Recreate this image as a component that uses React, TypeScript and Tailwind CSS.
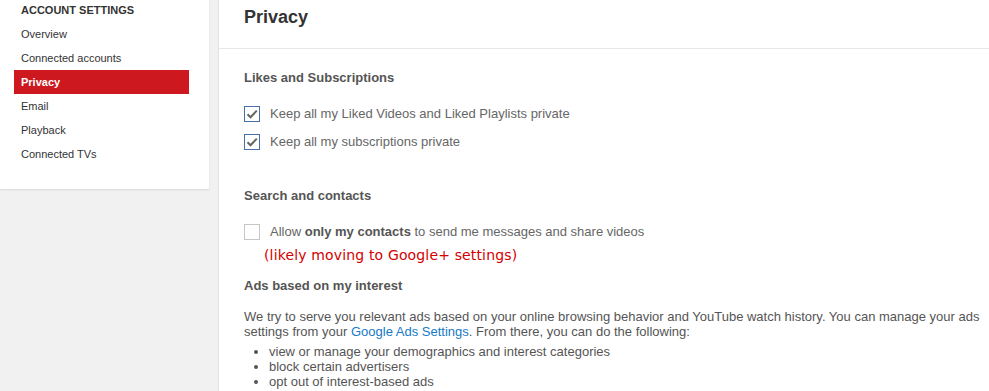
import React from "react";

const navItems = ["Overview", "Connected accounts", "Privacy", "Email", "Playback", "Connected TVs"];

const Checkbox = ({ checked }: { checked: boolean }) => (
  <span
    className={
      "flex h-[16px] w-[16px] shrink-0 items-center justify-center border bg-white " +
      (checked ? "border-[#4a6ea8]" : "border-[#c6c6c6]")
    }
  >
    {checked && (
      <svg width="12" height="12" viewBox="0 0 12 12">
        <path d="M1.5 6.2 L4.5 9.2 L10.8 2.6" fill="none" stroke="#666" strokeWidth="2" />
      </svg>
    )}
  </span>
);

const CheckRow = ({ checked, children }: { checked: boolean; children: React.ReactNode }) => (
  <label className="flex h-5 items-center gap-[10px] text-[13px] text-[#666]">
    <Checkbox checked={checked} />
    <span>{children}</span>
  </label>
);

export default function App() {
  return (
    <div className="flex h-[391px] w-[989px] overflow-hidden bg-[#f1f1f1] font-['Liberation_Sans',Arial,sans-serif]">
      {/* left nav */}
      <div className="flex w-[218px] shrink-0 flex-col">
        <div className="w-[209px] bg-white pb-[23px] shadow-[0_1px_2px_rgba(0,0,0,0.1)]">
          <div className="h-[22px] pl-[21px] text-[11px] font-bold leading-[20px] text-[#333]">ACCOUNT SETTINGS</div>
          {navItems.map((item) => (
            <div
              key={item}
              className={
                "ml-[14px] mr-[20px] h-6 px-[7px] text-[11px] leading-6 " +
                (item === "Privacy" ? "bg-[#cc181e] font-bold text-white" : "text-[#333]")
              }
            >
              {item}
            </div>
          ))}
        </div>
      </div>

      {/* main panel */}
      <div className="flex-1 border-l border-[#e3e3e3] bg-white">
        <div className="h-[49px] border-b border-[#e8e8e8] px-[25px]">
          <h1 className="pt-[6px] text-[18px] font-bold leading-[22px] text-[#333]">Privacy</h1>
        </div>

        <div className="pl-[25px] pr-[4px]">
          <h3 className="mt-[19px] text-[13px] font-bold leading-5 text-[#555]">Likes and Subscriptions</h3>
          <div className="mt-[16px] flex flex-col gap-[8px]">
            <CheckRow checked>Keep all my Liked Videos and Liked Playlists private</CheckRow>
            <CheckRow checked>Keep all my subscriptions private</CheckRow>
          </div>

          <h3 className="mt-[34px] text-[13px] font-bold leading-5 text-[#555]">Search and contacts</h3>
          <div className="mt-[16px]">
            <CheckRow checked={false}>
              Allow <b className="text-[#555]">only my contacts</b> to send me messages and share videos
            </CheckRow>
          </div>
          <div className="mt-[3px] pl-[20px] font-['DejaVu_Sans',sans-serif] text-[14px] leading-5 tracking-[0.15px] text-[#d40000]">
            (likely moving to Google+ settings)
          </div>

          <h3 className="mt-[11px] text-[13px] font-bold leading-5 text-[#555]">Ads based on my interest</h3>
          <p className="mt-[13px] text-[13px] leading-[15px] text-[#555]">
            We try to serve you relevant ads based on your online browsing behavior and YouTube watch history. You can
            manage your ads settings from your <a className="text-[#167ac6]">Google Ads Settings</a>. From there, you
            can do the following:
          </p>
          <ul className="mt-[5px] list-disc pl-[25px] text-[13px] leading-[15px] text-[#555]">
            <li>view or manage your demographics and interest categories</li>
            <li>block certain advertisers</li>
            <li>opt out of interest-based ads</li>
          </ul>
        </div>
      </div>
    </div>
  );
}
